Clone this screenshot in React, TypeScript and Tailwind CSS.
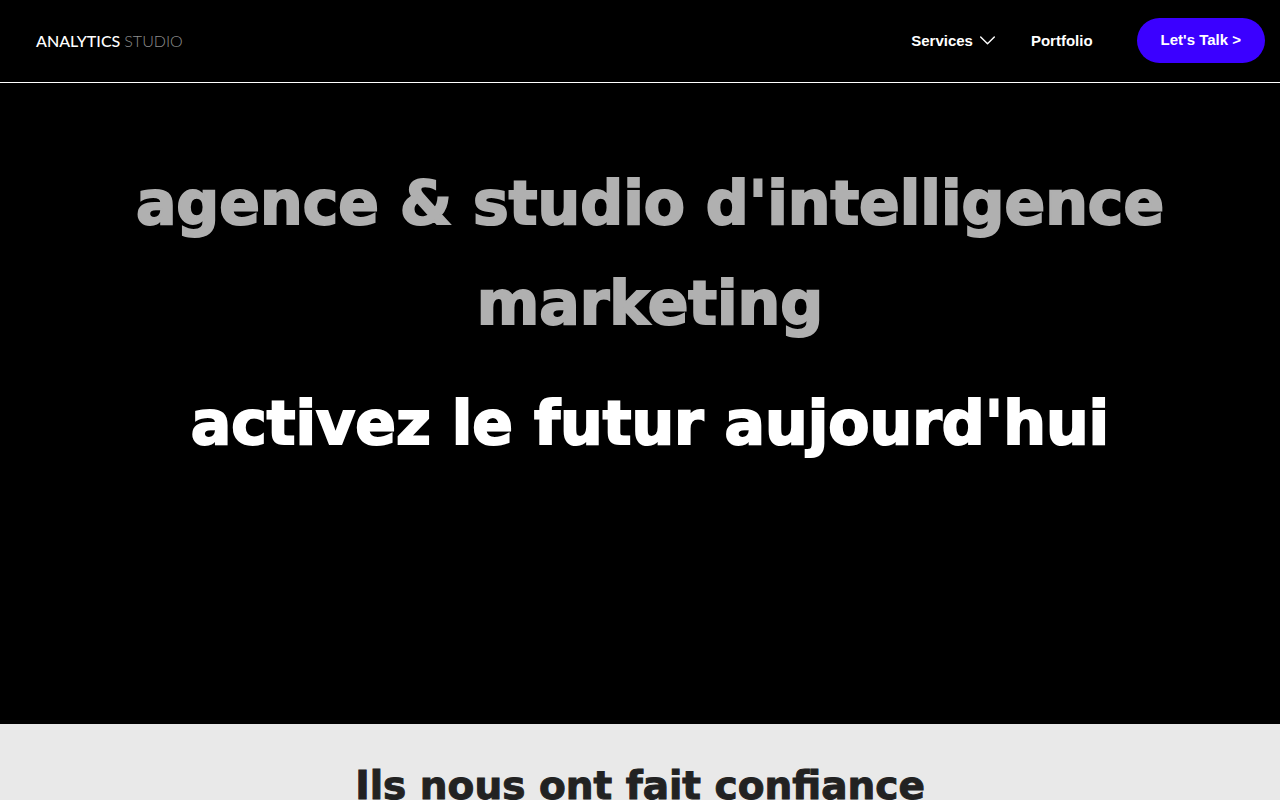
import { useState } from 'react'

export default function App() {
  return (
    <div className="min-h-screen bg-black font-['Liberation_Sans',Arial,sans-serif]">
      <Header />
      <main>
        <Hero />
        <Clients />
      </main>
    </div>
  )
}

function Header() {
  const [open, setOpen] = useState(false)

  return (
    <header className="flex h-[83px] items-center justify-between border-b border-white pr-[15px] pb-px pl-9 text-white">
      <a href="#" className="font-['Lato',sans-serif] text-base leading-6 font-medium">
        ANALYTICS <span className="font-light text-[#8c8c8c]">STUDIO</span>
      </a>

      <nav className="flex items-center text-[15px] leading-6 font-bold">
        <button
          type="button"
          aria-expanded={open}
          onClick={() => setOpen(!open)}
          className="mr-9 flex items-center gap-[7px]"
        >
          Services
          <svg width="15" height="9" viewBox="0 0 15 9" fill="none" stroke="currentColor" strokeWidth="1.4">
            <path d="M0.7 1 L7.5 7.8 L14.3 1" strokeLinecap="round" strokeLinejoin="round" />
          </svg>
        </button>
        <a href="#portfolio" className="mr-11">Portfolio</a>
        <a href="#contact" className="rounded-full bg-[#3b00ff] px-6 pt-2.5 pb-[11px]">
          Let's Talk &gt;
        </a>
      </nav>
    </header>
  )
}

function Hero() {
  return (
    <section className="min-h-[641px] pt-[70px] pr-[90px] pl-[110px] text-center font-['Arial_Black','DejaVu_Sans',sans-serif] text-[60px] leading-[100px] font-black [-webkit-text-stroke:2px]">
      <h1 className="text-[#b0b0b0]">agence &amp; studio d'intelligence marketing</h1>
      <h2 className="mt-5 text-white">activez le futur aujourd'hui</h2>
    </section>
  )
}

function Clients() {
  return (
    <section className="bg-[#e9e9e9] px-6 py-8 text-center">
      <h2 className="font-['Arial_Black','DejaVu_Sans',sans-serif] text-[39px] leading-[60px] font-black text-[#222222] [-webkit-text-stroke:1px]">
        Ils nous ont fait confiance
      </h2>
    </section>
  )
}
